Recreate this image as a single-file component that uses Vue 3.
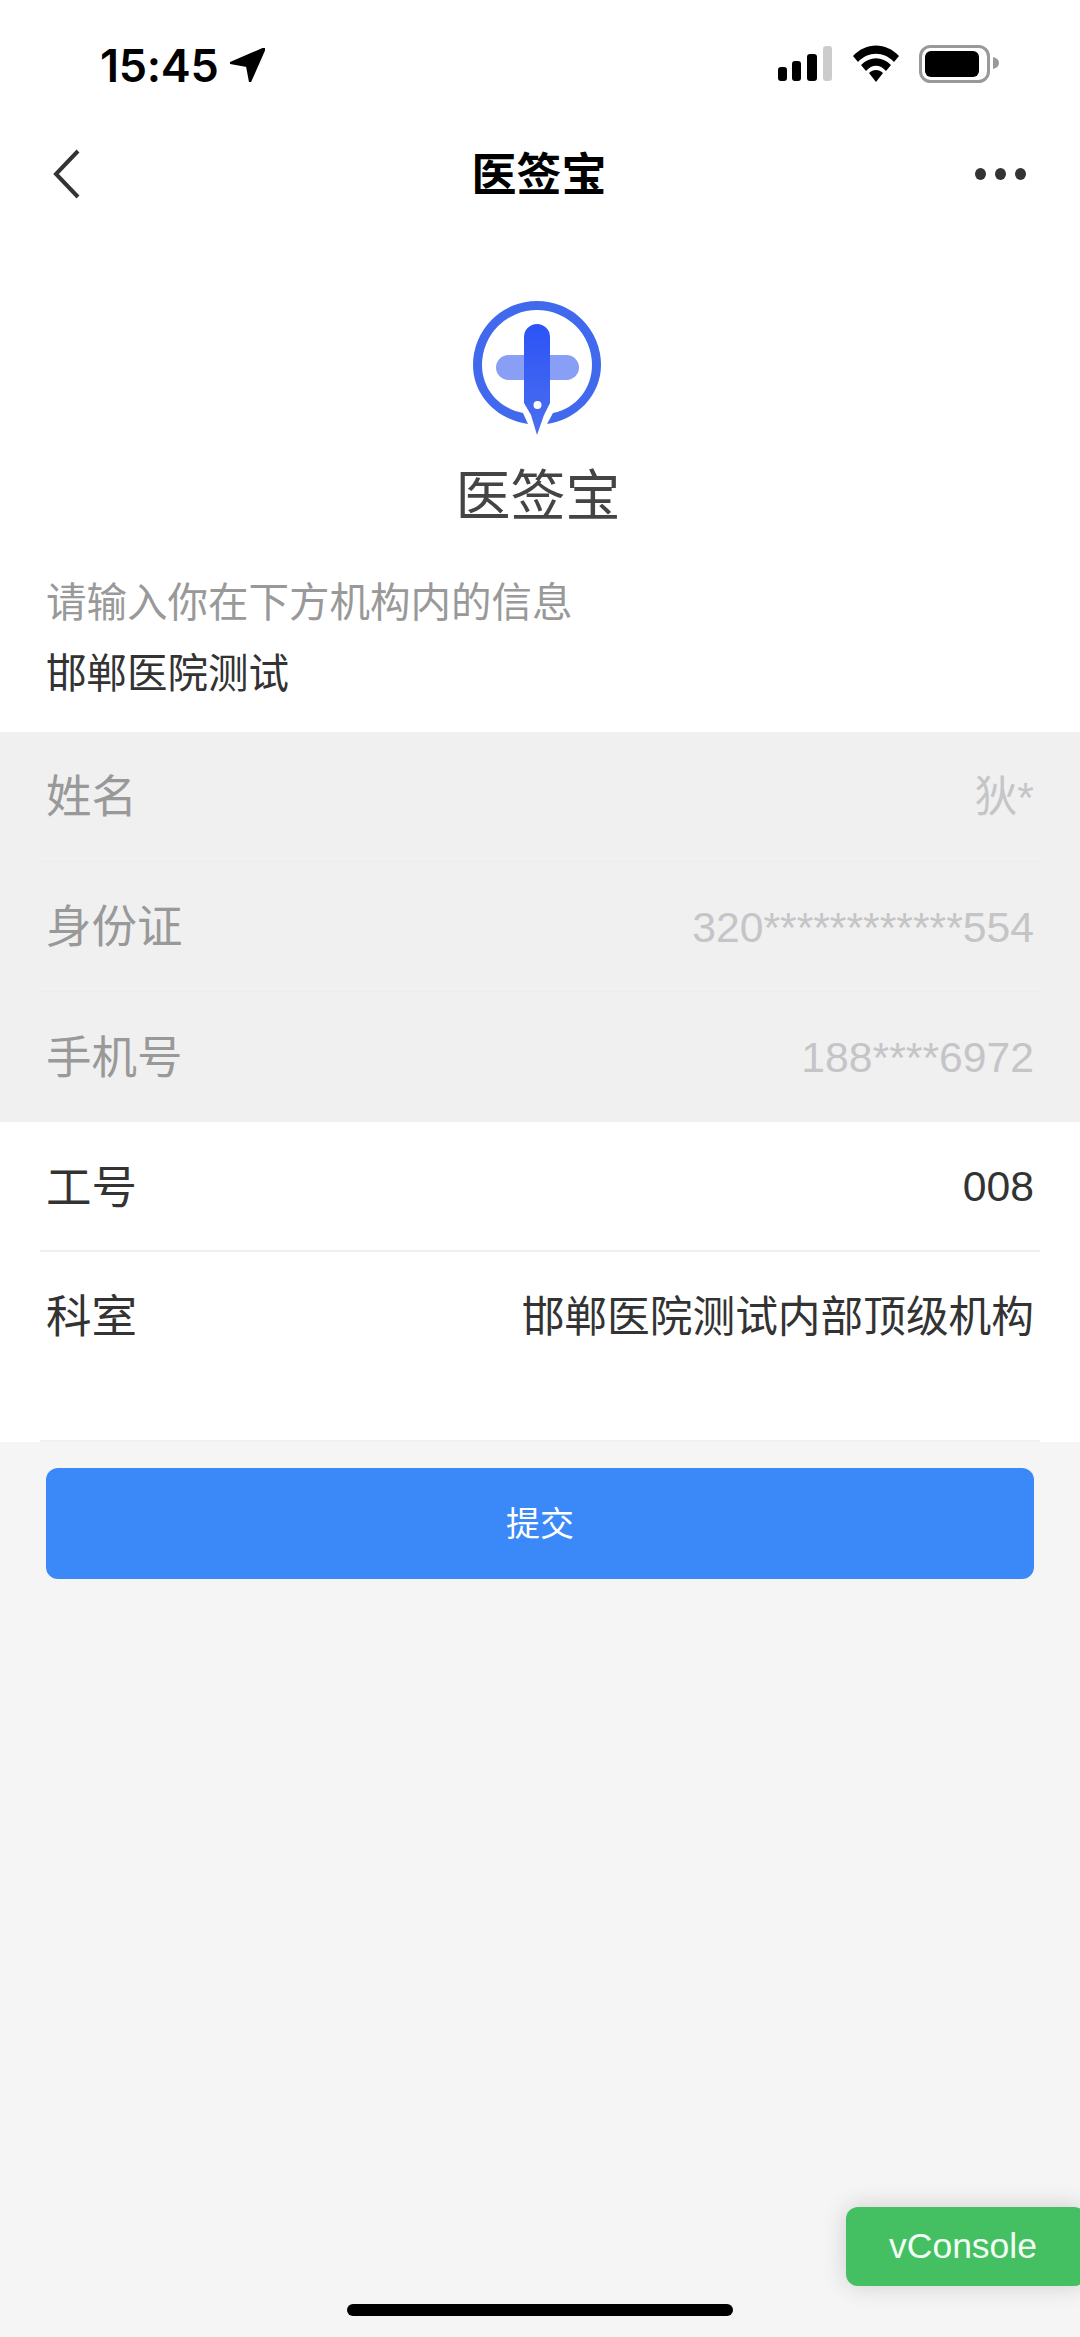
<script setup>
const lockedRows = [
  { label: '姓名', value: '狄*' },
  { label: '身份证', value: '320************554' },
  { label: '手机号', value: '188****6972' }
]
const openRows = [
  { label: '工号', value: '008' },
  { label: '科室', value: '邯郸医院测试内部顶级机构' }
]
</script>

<template>
  <div class="page">
    <div class="status">
      <div class="time">
        <span>15:45</span>
        <svg class="arrow" viewBox="232 48 35 34" width="35" height="34">
          <path d="M267 48 L232 63 L249 66 L252 82 Z" fill="#000" stroke="#000" stroke-width="2" stroke-linejoin="round" />
        </svg>
      </div>
      <svg class="status-icons" viewBox="778 44 221 42" width="221" height="42">
        <rect x="778" y="67" width="9" height="14" rx="3" fill="#000" />
        <rect x="792" y="61" width="9" height="20" rx="3" fill="#000" />
        <rect x="807" y="54" width="10" height="27" rx="3" fill="#000" />
        <rect x="823" y="46" width="9" height="35" rx="3" fill="#ccc" />
        <path d="M853 56 C866 42 886 42 899 56 L894 62 C884 51 868 51 858 62 Z" fill="#000" />
        <path d="M861 65 C870 56 882 56 891 65 L886 71 C880 64 872 64 866 71 Z" fill="#000" />
        <path d="M869 73 C873 69 879 69 883 73 L876 82 Z" fill="#000" />
        <rect x="920.5" y="46.5" width="68" height="35" rx="10" fill="none" stroke="#999" stroke-width="3" />
        <rect x="925" y="51" width="54" height="26" rx="6" fill="#000" />
        <path d="M993 57 C997 58 999 60 999 63 C999 66 997 68 993 69 Z" fill="#999" />
      </svg>
    </div>

    <div class="nav">
      <div class="nav-side">
        <svg class="back" viewBox="0 0 30 50" width="30" height="50">
          <path d="M26 2 L4 25 L26 48" fill="none" stroke="#333" stroke-width="4" />
        </svg>
      </div>
      <span class="nav-title">医签宝</span>
      <div class="nav-side dots"><i></i><i></i><i></i></div>
    </div>

    <div class="head">
      <svg class="logo" viewBox="400 296 280 144" width="280" height="144">
        <defs>
          <linearGradient id="penFill" x1="0" y1="0" x2="0" y2="1">
            <stop offset="0" stop-color="#2c53f6" />
            <stop offset="1" stop-color="#4b70ef" />
          </linearGradient>
        </defs>
        <path d="M527 424 C497 420 472 396 472 365 A64 64 0 0 1 600 365 C600 396 575 420 546 424 L552 413 C576 408 591 388 591 365 A55 55 0 0 0 481 365 C481 388 497 408 522 413 Z" fill="#4169ee" />
        <rect x="495" y="355" width="83" height="25" rx="12.5" fill="#899ff6" />
        <path d="M523 337 A13 13 0 0 1 549 337 V403 L543 415 L536 435 L530 415 L523 403 Z" fill="url(#penFill)" />
        <circle cx="536.5" cy="405" r="4" fill="#fff" />
      </svg>
      <div class="brand">医签宝</div>
      <div class="hint">请输入你在下方机构内的信息</div>
      <div class="org">邯郸医院测试</div>
    </div>

    <div class="locked">
      <div v-for="r in lockedRows" :key="r.label" class="row">
        <span class="label">{{ r.label }}</span>
        <span class="value">{{ r.value }}</span>
      </div>
    </div>

    <div class="open">
      <div v-for="r in openRows" :key="r.label" class="row">
        <span class="label">{{ r.label }}</span>
        <span class="value">{{ r.value }}</span>
      </div>
    </div>

    <button class="submit"><span>提交</span></button>

    <div class="vconsole">vConsole</div>
    <div class="home-bar"></div>
  </div>
</template>

<style>
body {
  background: #f5f5f5;
}
</style>

<style scoped>
.page {
  position: relative;
  height: 2337px;
  overflow: hidden;
  background: #f5f5f5;
  font-family: "Liberation Sans", "Noto Sans CJK SC", sans-serif;
}

.status {
  height: 128px;
  box-sizing: border-box;
  padding: 44px 81px 0 100px;
  background: #fff;
  display: flex;
  justify-content: space-between;
  align-items: flex-start;
}

.time {
  display: flex;
  align-items: center;
  gap: 12px;
  height: 42px;
  font-family: Inter, sans-serif;
  font-weight: 600;
  font-size: 45px;
  letter-spacing: -0.3px;
  color: #000;
}

.nav {
  height: 92px;
  padding: 0 54px 0 52px;
  background: #fff;
  display: flex;
  align-items: center;
  justify-content: space-between;
}

.nav-side {
  width: 60px;
}

.back {
  display: block;
}

.nav-title {
  padding-top: 3px;
  font-size: 45px;
  line-height: 56px;
  font-weight: 700;
  color: #000;
}

.dots {
  display: flex;
  justify-content: flex-end;
  gap: 9px;
}

.dots i {
  width: 11px;
  height: 12px;
  border-radius: 50%;
  background: #333;
}

.head {
  padding: 76px 0 30px;
  background: #fff;
  display: flex;
  flex-direction: column;
}

.logo {
  align-self: center;
  margin-left: 2px;
}

.brand {
  margin-top: 21px;
  padding-right: 4px;
  text-align: center;
  font-size: 55px;
  line-height: 70px;
  color: #444;
}

.hint {
  margin: 44px 0 0 46px;
  font-size: 40.5px;
  line-height: 56px;
  color: #999;
}

.org {
  margin: 15px 0 0 46px;
  font-size: 40.5px;
  line-height: 56px;
  color: #333;
}

.row {
  height: 130px;
  box-sizing: border-box;
  margin: 0 40px;
  padding: 0 6px 0 6px;
  display: flex;
  justify-content: space-between;
  align-items: center;
}

.label {
  font-size: 45.5px;
  margin-bottom: 7px;
}

.value {
  font-size: 42.7px;
  line-height: 50px;
}

.locked {
  background: #f0f0f0;
}

.locked .row {
  border-bottom: 1px solid #ececec;
  color: #999;
}

.locked .row:last-child {
  border-bottom: none;
}

.locked .value {
  color: #c5c5c8;
}

.open {
  background: #fff;
}

.open .row {
  border-bottom: 2px solid #f0f0f0;
  color: #333;
}

.open .label {
  margin-bottom: 5px;
}

.open .row:last-child {
  height: 190px;
  align-items: flex-start;
  line-height: 130px;
}

.open .row:last-child .label {
  margin-bottom: 0;
  padding-top: 1px;
}

.open .row:last-child .value {
  line-height: 130px;
}

.submit {
  display: block;
  width: 988px;
  height: 111px;
  margin: 26px 46px 0;
  padding: 0 0 5px;
  border: none;
  border-radius: 12px;
  background: #3b88f9;
  color: #fff;
  font-family: inherit;
  font-size: 34px;
}

.vconsole {
  position: absolute;
  left: 846px;
  top: 2207px;
  width: 240px;
  height: 79px;
  box-sizing: border-box;
  padding-left: 43px;
  border-radius: 12px;
  background: #44bf61;
  box-shadow: 0 0 24px rgba(0, 0, 0, 0.16);
  color: #f2fff4;
  font-size: 35.5px;
  line-height: 79px;
}

.home-bar {
  position: absolute;
  left: 347px;
  top: 2304px;
  width: 386px;
  height: 12px;
  border-radius: 6px;
  background: #000;
}
</style>
